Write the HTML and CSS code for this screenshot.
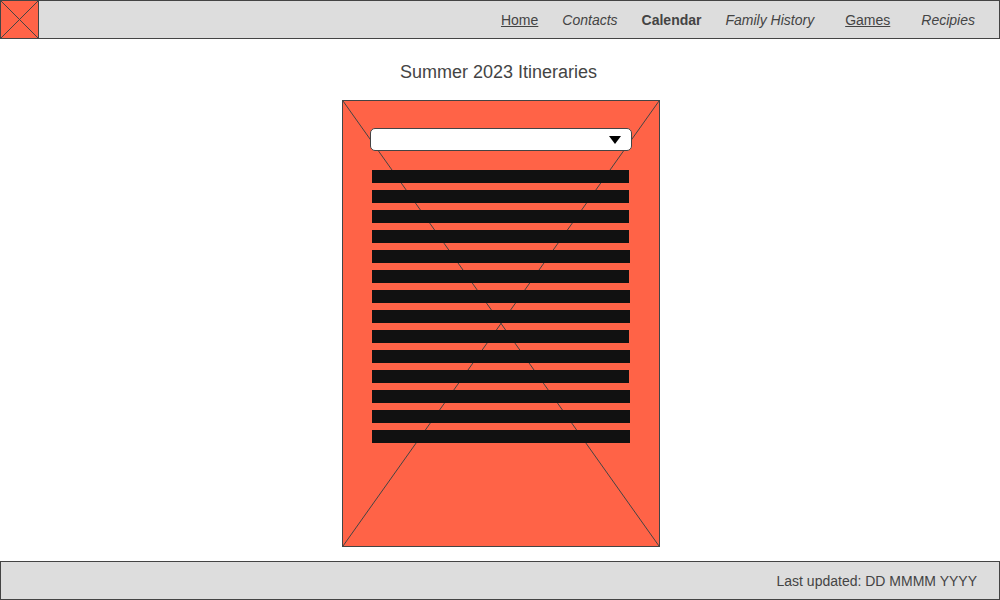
FILE: index.html
```html
<!DOCTYPE html>
<html lang="en">
<head>
<meta charset="utf-8">
<meta name="viewport" content="width=device-width, initial-scale=1">
<title>Summer 2023 Itineraries</title>
<link rel="stylesheet" href="styles.css">
</head>
<body class="page">
<header class="bar">
  <svg class="logo" viewBox="0 0 37 37" preserveAspectRatio="none" aria-hidden="true">
    <path class="cross" d="M0 0L37 37M37 0L0 37"/>
  </svg>
  <nav class="nav">
    <div class="nav-group">
      <a class="link link-plain" href="#home">Home</a>
      <a class="link link-italic" href="#contacts">Contacts</a>
      <a class="link link-current" href="#calendar" aria-current="page">Calendar</a>
      <a class="link link-italic" href="#family-history">Family History</a>
    </div>
    <a class="link link-plain" href="#games">Games</a>
    <a class="link link-italic" href="#recipies">Recipies</a>
  </nav>
</header>
<main class="main">
  <h1 class="title">Summer 2023 Itineraries</h1>
  <section class="card">
    <svg class="backdrop" viewBox="0 0 316 445" preserveAspectRatio="none" aria-hidden="true">
      <path class="cross" d="M0 0L316 445M316 0L0 445"/>
    </svg>
    <div class="picker">
      <select class="select" aria-label="Itinerary">
        <option></option>
      </select>
      <svg class="arrow" viewBox="0 0 12 8" aria-hidden="true"><path d="M0 0H12L6 8Z"/></svg>
    </div>
    <div class="lines">
      <div class="line line-short"></div>
      <div class="line line-short"></div>
      <div class="line line-short"></div>
      <div class="line line-short"></div>
      <div class="line"></div>
      <div class="line line-short"></div>
      <div class="line"></div>
      <div class="line"></div>
      <div class="line line-short"></div>
      <div class="line"></div>
      <div class="line line-short"></div>
      <div class="line"></div>
      <div class="line"></div>
      <div class="line"></div>
    </div>
  </section>
</main>
<footer class="bar bar-footer">Last updated: DD MMMM YYYY</footer>
</body>
</html>
```

FILE: styles.css
```css
* {
  box-sizing: border-box;
}

.page {
  display: flex;
  flex-direction: column;
  min-height: 100vh;
  margin: 0;
  background: #fff;
  color: #444;
  font: 14px/17px "Liberation Sans", Arial, sans-serif;
}

.bar {
  display: flex;
  align-items: center;
  justify-content: space-between;
  padding-right: 24px;
  background: #ddd;
  border: 1px solid #444;
}

.bar-footer {
  justify-content: flex-end;
  padding: 11px 22px 9px;
}

.logo {
  width: 38px;
  height: 37px;
  background: #ff6347;
  border-right: 1px solid #444;
}

.cross {
  fill: none;
  stroke: #444;
  stroke-width: 1;
  vector-effect: non-scaling-stroke;
}

.nav {
  display: flex;
  gap: 31px;
  padding-top: 2px;
}

.nav-group {
  display: flex;
  gap: 24px;
}

.link {
  color: #444;
  text-decoration: none;
}

.link-plain {
  text-decoration: underline;
}

.link-italic {
  font-style: italic;
}

.link-current {
  font-weight: bold;
}

.main {
  flex: 1;
  display: flex;
  flex-direction: column;
  align-items: center;
  padding: 22px 0 14px 2px;
}

.title {
  margin: 0 5px 17px 0;
  font-size: 18px;
  font-weight: normal;
  line-height: 22px;
}

.card {
  position: relative;
  width: 318px;
  max-width: 100%;
  padding: 27px 27px 103px;
  background: #ff6347;
  border: 1px solid #444;
}

.backdrop {
  position: absolute;
  inset: 0;
  width: 100%;
  height: 100%;
}

.picker {
  position: relative;
}

.select {
  display: block;
  width: 100%;
  height: 23px;
  padding: 0 24px 0 8px;
  appearance: none;
  background: #fff;
  border: 1px solid #444;
  border-radius: 5px;
  color: #444;
  font: inherit;
}

.arrow {
  position: absolute;
  top: 8px;
  right: 11px;
  width: 12px;
  height: 8px;
  fill: #000;
  pointer-events: none;
}

.lines {
  position: relative;
  display: grid;
  gap: 7px;
  padding: 19px 2px 0;
}

.line {
  height: 13px;
  background: #111;
}

.line-short {
  margin-right: 1px;
}
```
